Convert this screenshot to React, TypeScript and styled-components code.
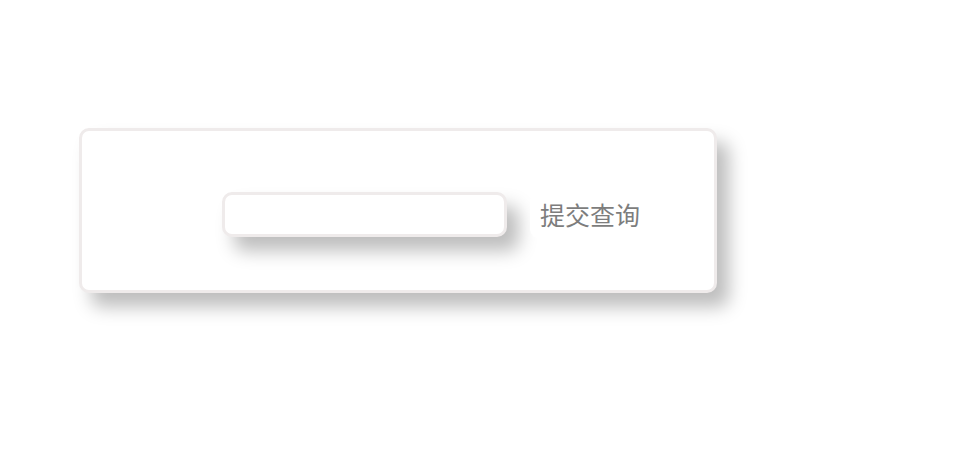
import React from "react";
import styled, { createGlobalStyle } from "styled-components";

const Global = createGlobalStyle`
  html, body { margin: 0; padding: 0; background: #ffffff; }
  body { font-family: "Noto Sans CJK SC", "Noto Sans", sans-serif; }
`;

const Page = styled.div`
  box-sizing: border-box;
  min-height: 450px;
  padding: 128px 0 0 79px;
`;

const Card = styled.form`
  box-sizing: border-box;
  width: 638px;
  height: 165px;
  border: 3px solid #efebeb;
  border-radius: 10px;
  background: #ffffff;
  box-shadow: 12px 14px 18px rgba(0, 0, 0, 0.26);
  display: flex;
  align-items: center;
  padding: 8px 0 0 140px;
  gap: 23px;
`;

const Field = styled.input`
  box-sizing: border-box;
  width: 285px;
  height: 45px;
  border: 3px solid #efebeb;
  border-radius: 10px;
  background: #ffffff;
  box-shadow: 12px 14px 18px rgba(0, 0, 0, 0.26);
  outline: none;
`;

const Submit = styled.button`
  height: 48px;
  padding: 0 10px;
  border: none;
  border-radius: 10px;
  background: #ffffff;
  color: #7d7d7d;
  font-family: "Noto Sans CJK SC", "Noto Sans", sans-serif;
  font-size: 25px;
  line-height: 1;
  cursor: pointer;
`;

export default function App() {
  return (
    <>
      <Global />
      <Page>
        <Card onSubmit={(e) => e.preventDefault()}>
          <Field type="text" />
          <Submit type="submit">提交查询</Submit>
        </Card>
      </Page>
    </>
  );
}
